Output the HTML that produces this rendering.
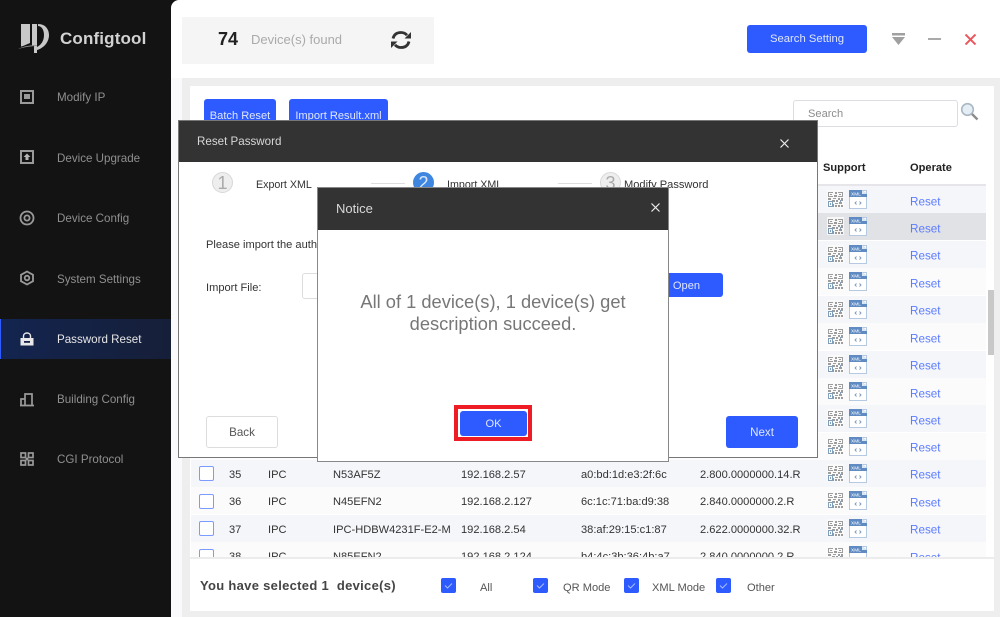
<!DOCTYPE html>
<html><head><meta charset="utf-8"><style>
*{box-sizing:border-box}
html,body{margin:0;padding:0;width:1000px;height:617px;overflow:hidden;background:#131313;font-family:"Liberation Sans",sans-serif;font-size:11.1px;color:#333}
.a{position:absolute;white-space:nowrap}
.nav{position:absolute;left:57px;color:#8f8f8f;font-size:11.6px;line-height:14px;white-space:nowrap}
.ni{position:absolute;left:19px;width:16px;height:16px}
.btn{position:absolute;background:#2e5bff;color:#dfe6ff;border-radius:3px;text-align:center;font-size:11.1px}
.row{position:absolute;left:191px;width:795px;height:27.4px;background:#f5f6fa}
.row.o{background:#fbfbfc}
.row.h{background:#e1e2e5}
.c{position:absolute;top:15px;transform:translateY(-50%);white-space:nowrap;color:#333;font-size:11.1px}
.r{left:719px;color:#5c7cff;font-size:11.7px;top:15.5px}
.q{position:absolute;left:636px;top:4px;width:17px;height:18px}
.x{position:absolute;left:658px;top:4px;width:18px;height:19px}
.cb{position:absolute;left:8px;top:6.5px;width:15px;height:15px;border:1px solid #7c9bff;border-radius:2px;background:#fff}
.ck{position:absolute;width:15px;height:15px;background:#2e5bff;border-radius:2px;top:578px}
.sc{position:absolute;width:21px;height:21px;border-radius:50%;text-align:center;font-size:18px;line-height:20px;background:#eee;border:1px solid #d8d8d8;color:#aaa;font-family:"Liberation Sans",sans-serif}
</style></head><body>
<svg width="0" height="0" style="position:absolute"><defs>
<g id="qr" opacity=".85"><rect width="17" height="18" fill="#fbfbfb"/><path d="M1 2h5v1H2v3h4v1H1zM3 4h2v1H3zM11 2h5v5h-5V6h4V3h-4zM12 4h2v1h-2zM8 2h2v2H8zM7 5h3v2H7zM1 8h3v2H1zM6 8h3v1H6zM11 8h2v2h-2zM14 8h2v3h-2zM5 10h3v2H5zM9 10h2v2H9zM12 12h3v2h-3zM8 13h3v1H8zM8 15h2v2H8zM11 15h2v2h-2zM14 15h2v2h-2z" fill="#8d8d8d"/><path d="M1 11h5v6H1zM2 12v4h3v-4zM3 13h1v2H3zM6 14h1v3H6zM13 10h1v2h-1z" fill="#6c8fb0" fill-rule="evenodd"/></g>
<g id="xm"><rect x=".5" y=".5" width="17" height="18" fill="#fff" stroke="#b5c9e2"/><path d="M0 0h13l5 4v3H0z" fill="#5f8bc2"/><path d="M13 0l5 4h-5z" fill="#dbe6f3"/><text x="2" y="5.500" font-size="4.800" fill="#fff" font-family="Liberation Sans">XML</text><path d="M7.500 11.500l-1.500 1.500 1.500 1.500M10.500 11.500l1.500 1.500-1.500 1.500" fill="none" stroke="#7b97b8" stroke-width=".9"/></g>
<path id="tick" d="M4 7.500l2.500 2.500L11 5.500" fill="none" stroke="#a8bcff" stroke-width="1"/>
</defs></svg>

<!-- sidebar -->
<div class="a" style="left:0;top:0;width:180px;height:617px;background:#131313"></div>
<svg class="a" style="left:17px;top:22px" width="34" height="33" viewBox="0 0 34 33"><path d="M4 2h9v19l-7 3-2 .500z" fill="#c8c8c8"/><path d="M15 2h5v29h-3v-8l-2 .500z" fill="#c8c8c8"/><path d="M21 2c8 0 11 6 11 11 0 7-5 13-12 15v-3c4-2 7-6 7-12 0-6-3-9-6-9z" fill="#c8c8c8"/><path d="M1 27c6-3 14-4 19-4v1c-6 0-13 1-19 3z" fill="#9a9a9a"/></svg>
<div class="a" style="left:60px;top:29px;font-size:17px;line-height:20px;font-weight:bold;color:#d2d2d2;letter-spacing:.15px">Configtool</div>

<svg class="ni" style="top:89px" viewBox="0 0 16 16"><rect x="2" y="2" width="12" height="12" fill="none" stroke="#9a9a9a" stroke-width="2"/><rect x="5" y="5" width="6" height="5" fill="#9a9a9a"/></svg>
<div class="nav" style="top:91px">Modify IP</div>
<svg class="ni" style="top:149px" viewBox="0 0 16 16"><rect x="2" y="2" width="12" height="12" fill="none" stroke="#9a9a9a" stroke-width="2"/><path d="M8 4.500l3.500 3.500H9.500v3h-3V8H4.500z" fill="#b5b5b5"/></svg>
<div class="nav" style="top:152px">Device Upgrade</div>
<svg class="ni" style="top:210px" viewBox="0 0 16 16"><circle cx="8" cy="8" r="6.500" fill="none" stroke="#9a9a9a" stroke-width="1.800"/><circle cx="8" cy="8" r="2.600" fill="none" stroke="#9a9a9a" stroke-width="1.800"/></svg>
<div class="nav" style="top:212px">Device Config</div>
<svg class="ni" style="top:270px" viewBox="0 0 16 16"><path d="M8 1.500l6 3.300v6.400l-6 3.300-6-3.300V4.800z" fill="none" stroke="#9a9a9a" stroke-width="1.800"/><circle cx="8" cy="8" r="2.300" fill="none" stroke="#9a9a9a" stroke-width="1.800"/></svg>
<div class="nav" style="top:273px">System Settings</div>

<div class="a" style="left:0;top:319px;width:173px;height:40px;background:linear-gradient(90deg,#13244f,#161f38);border-left:1px solid #2e5bff"></div>
<svg class="ni" style="top:331px" viewBox="0 0 16 16"><path d="M4.500 7.500V5c0-4 7-4 7 0v2.500" fill="none" stroke="#e8e8e8" stroke-width="1.400"/><rect x="1.500" y="7" width="13" height="7.500" fill="#e8e8e8"/><rect x="5" y="10" width="6" height="1.800" fill="#16224a"/></svg>
<div class="nav" style="top:333px;color:#e6e6e6">Password Reset</div>

<svg class="ni" style="top:391px" viewBox="0 0 16 16"><path d="M2 14V8h4v6M6 14V3h7v11M1 14.500h14" fill="none" stroke="#9a9a9a" stroke-width="1.700"/></svg>
<div class="nav" style="top:393px">Building Config</div>
<svg class="ni" style="top:451px" viewBox="0 0 16 16"><g fill="none" stroke="#9a9a9a" stroke-width="1.700"><rect x="2" y="2" width="4.500" height="4.500"/><rect x="9.500" y="2" width="4.500" height="4.500"/><rect x="2" y="9.500" width="4.500" height="4.500"/><rect x="9.500" y="9.500" width="4.500" height="4.500"/></g><path d="M6 6l4 4M10 6l-4 4" stroke="#9a9a9a" stroke-width="1.500"/></svg>
<div class="nav" style="top:453px">CGI Protocol</div>

<!-- main -->
<div class="a" style="left:171px;top:0;width:829px;height:617px;background:#fff;border-top-left-radius:8px"></div>
<div class="a" style="left:171px;top:78px;width:11px;height:539px;background:#fafafc"></div>
<div class="a" style="left:182px;top:78px;width:818px;height:539px;background:#eee"></div>
<div class="a" style="left:190px;top:86px;width:804px;height:525px;background:#fff"></div>

<div class="a" style="left:182px;top:17px;width:252px;height:47px;background:#f5f5f5"></div>
<div class="a" style="left:218px;top:28px;font-size:18px;line-height:22px;font-weight:bold;color:#222">74</div>
<div class="a" style="left:251px;top:32px;font-size:13px;line-height:15px;color:#aaa">Device(s) found</div>
<svg class="a" style="left:390px;top:29px" width="22" height="22" viewBox="0 0 22 22"><path d="M3 9.500C4 5.500 7 3.500 11 3.500c2.500 0 4.500 1 6 2.700M19 12.500c-1 4-4 6-8 6-2.500 0-4.500-1-6-2.700" fill="none" stroke="#333" stroke-width="2.800"/><path d="M21 3v6.500h-6.500zM1 19v-6.500h6.500z" fill="#333"/></svg>

<div class="btn" style="left:747px;top:25px;width:120px;height:28px;line-height:29px;font-size:11.3px">Search Setting</div>
<svg class="a" style="left:890px;top:31px" width="16" height="16" viewBox="0 0 16 16"><rect x="2" y="2" width="13" height="2.500" fill="#a0a0a0"/><path d="M2 6h13l-6.500 8z" fill="#a0a0a0"/></svg>
<div class="a" style="left:928px;top:38px;width:13px;height:2px;background:#aaa"></div>
<svg class="a" style="left:965px;top:34px" width="11" height="11" viewBox="0 0 11 11"><path d="M.5.500l10 10M10.500.500l-10 10" stroke="#e8585c" stroke-width="2"/></svg>

<div class="btn" style="left:204px;top:99px;width:72px;height:30px;line-height:35px">Batch Reset</div>
<div class="btn" style="left:289px;top:99px;width:99px;height:30px;line-height:35px">Import Result.xml</div>
<div class="a" style="left:793px;top:100px;width:165px;height:27px;border:1px solid #dcdde3;border-radius:3px;background:#fff;padding-left:14px;line-height:27px;color:#8c8c8c">Search</div>
<svg class="a" style="left:960px;top:102px" width="19" height="20" viewBox="0 0 19 20"><circle cx="7.500" cy="7.500" r="5.800" fill="#e6eef5" stroke="#a9b8c4" stroke-width="1.600"/><path d="M12 12l5.500 5.500" stroke="#8d8d8d" stroke-width="2.400"/></svg>

<div class="a" style="left:823px;top:161px;font-weight:bold;color:#222;line-height:14px">Support</div>
<div class="a" style="left:910px;top:161px;font-weight:bold;color:#222;line-height:14px">Operate</div>
<div class="a" style="left:191px;top:184px;width:795px;height:2px;background:#e6e6ea"></div>

<!-- rows -->
<div class="row" style="top:186px"><svg class="q"><use href="#qr"/></svg><svg class="x"><use href="#xm"/></svg><span class="c r">Reset</span></div>
<div class="row h" style="top:213px"><svg class="q"><use href="#qr"/></svg><svg class="x"><use href="#xm"/></svg><span class="c r">Reset</span></div>
<div class="row" style="top:240.500px"><svg class="q"><use href="#qr"/></svg><svg class="x"><use href="#xm"/></svg><span class="c r">Reset</span></div>
<div class="row o" style="top:268px"><svg class="q"><use href="#qr"/></svg><svg class="x"><use href="#xm"/></svg><span class="c r">Reset</span></div>
<div class="row" style="top:295.500px"><svg class="q"><use href="#qr"/></svg><svg class="x"><use href="#xm"/></svg><span class="c r">Reset</span></div>
<div class="row o" style="top:323px"><svg class="q"><use href="#qr"/></svg><svg class="x"><use href="#xm"/></svg><span class="c r">Reset</span></div>
<div class="row" style="top:350.500px"><svg class="q"><use href="#qr"/></svg><svg class="x"><use href="#xm"/></svg><span class="c r">Reset</span></div>
<div class="row o" style="top:378px"><svg class="q"><use href="#qr"/></svg><svg class="x"><use href="#xm"/></svg><span class="c r">Reset</span></div>
<div class="row" style="top:405px"><svg class="q"><use href="#qr"/></svg><svg class="x"><use href="#xm"/></svg><span class="c r">Reset</span></div>
<div class="row o" style="top:432.500px"><svg class="q"><use href="#qr"/></svg><svg class="x"><use href="#xm"/></svg><span class="c r">Reset</span></div>
<div class="row" style="top:459.500px"><i class="cb"></i><span class="c" style="left:38px">35</span><span class="c" style="left:77px">IPC</span><span class="c" style="left:142px">N53AF5Z</span><span class="c" style="left:270px">192.168.2.57</span><span class="c" style="left:390px">a0:bd:1d:e3:2f:6c</span><span class="c" style="left:509px">2.800.0000000.14.R</span><svg class="q"><use href="#qr"/></svg><svg class="x"><use href="#xm"/></svg><span class="c r">Reset</span></div>
<div class="row o" style="top:487px"><i class="cb"></i><span class="c" style="left:38px">36</span><span class="c" style="left:77px">IPC</span><span class="c" style="left:142px">N45EFN2</span><span class="c" style="left:270px">192.168.2.127</span><span class="c" style="left:390px">6c:1c:71:ba:d9:38</span><span class="c" style="left:509px">2.840.0000000.2.R</span><svg class="q"><use href="#qr"/></svg><svg class="x"><use href="#xm"/></svg><span class="c r">Reset</span></div>
<div class="row" style="top:514.500px"><i class="cb"></i><span class="c" style="left:38px">37</span><span class="c" style="left:77px">IPC</span><span class="c" style="left:142px">IPC-HDBW4231F-E2-M</span><span class="c" style="left:270px">192.168.2.54</span><span class="c" style="left:390px">38:af:29:15:c1:87</span><span class="c" style="left:509px">2.622.0000000.32.R</span><svg class="q"><use href="#qr"/></svg><svg class="x"><use href="#xm"/></svg><span class="c r">Reset</span></div>
<div class="row o" style="top:542px"><i class="cb"></i><span class="c" style="left:38px">38</span><span class="c" style="left:77px">IPC</span><span class="c" style="left:142px">N85EFN2</span><span class="c" style="left:270px">192.168.2.124</span><span class="c" style="left:390px">b4:4c:3b:36:4b:a7</span><span class="c" style="left:509px">2.840.0000000.2.R</span><svg class="q"><use href="#qr"/></svg><svg class="x"><use href="#xm"/></svg><span class="c r">Reset</span></div>

<div class="a" style="left:988px;top:290px;width:6px;height:65px;background:#c8c8c8"></div>

<!-- footer -->
<div class="a" style="left:190px;top:557px;width:804px;height:54px;background:#fff;border-top:2px solid #ececec"></div>
<div class="a" style="left:200px;top:578px;font-size:13px;line-height:16px;font-weight:bold;color:#444;letter-spacing:.3px;white-space:pre">You have selected 1  device(s)</div>
<svg class="ck" style="left:441px"><use href="#tick"/></svg><div class="a" style="left:480px;top:581px;line-height:14px;color:#555">All</div>
<svg class="ck" style="left:533px"><use href="#tick"/></svg><div class="a" style="left:563px;top:581px;line-height:14px;color:#555">QR Mode</div>
<svg class="ck" style="left:624px"><use href="#tick"/></svg><div class="a" style="left:652px;top:581px;line-height:14px;color:#555">XML Mode</div>
<svg class="ck" style="left:716px"><use href="#tick"/></svg><div class="a" style="left:747px;top:581px;line-height:14px;color:#555">Other</div>

<!-- dialog 1 -->
<div class="a" style="left:178px;top:120px;width:640px;height:338px;background:#fff;border:1px solid #777"></div>
<div class="a" style="left:179px;top:121px;width:638px;height:41px;background:#333"></div>
<div class="a" style="left:197px;top:135px;line-height:14px;color:#d8d8d8;font-size:11.6px">Reset Password</div>
<svg class="a" style="left:780px;top:139px" width="9" height="9" viewBox="0 0 9 9"><path d="M.5.500l8 8M8.500.500l-8 8" stroke="#eee" stroke-width="1.200"/></svg>
<div class="sc" style="left:212px;top:172px">1</div>
<div class="a" style="left:256px;top:178px;line-height:14px;color:#333;font-size:10.7px">Export XML</div>
<div class="a" style="left:371px;top:183px;width:34px;height:1px;background:#ddd"></div>
<div class="sc" style="left:413px;top:172px;background:#3f86e0;border-color:#3f86e0;color:#dbe8fa">2</div>
<div class="a" style="left:447px;top:178px;line-height:14px;color:#333;font-size:10.7px">Import XML</div>
<div class="a" style="left:558px;top:183px;width:34px;height:1px;background:#ddd"></div>
<div class="sc" style="left:600px;top:172px">3</div>
<div class="a" style="left:624px;top:178px;line-height:14px;color:#333">Modify Password</div>
<div class="a" style="left:206px;top:238px;line-height:14px;color:#333">Please import the auth</div>
<div class="a" style="left:206px;top:281px;line-height:14px;color:#333">Import File:</div>
<div class="a" style="left:302px;top:273px;width:40px;height:26px;border:1px solid #ddd;border-radius:3px"></div>
<div class="btn" style="left:650px;top:273px;width:73px;height:24px;line-height:27px">Open</div>
<div class="a" style="left:206px;top:416px;width:72px;height:32px;border:1px solid #ddd;border-radius:3px;text-align:center;line-height:32px;color:#555;font-size:11.6px">Back</div>
<div class="btn" style="left:726px;top:416px;width:72px;height:32px;line-height:33px;font-size:11.6px">Next</div>

<!-- dialog 2 -->
<div class="a" style="left:317px;top:187px;width:352px;height:275px;background:#fff;border:1px solid #888"></div>
<div class="a" style="left:318px;top:188px;width:350px;height:42px;background:#333"></div>
<div class="a" style="left:336px;top:201px;font-size:13px;line-height:15px;color:#d8d8d8">Notice</div>
<svg class="a" style="left:651px;top:203px" width="9" height="9" viewBox="0 0 9 9"><path d="M.5.500l8 8M8.500.500l-8 8" stroke="#eee" stroke-width="1.200"/></svg>
<div class="a" style="left:318px;top:291px;width:350px;text-align:center;font-size:18.300px;line-height:22px;color:#777;white-space:normal;padding:0 30px">All of 1 device(s), 1 device(s) get description succeed.</div>
<div class="a" style="left:454px;top:405px;width:78px;height:36px;background:#fff;border:4px solid #ee1c25"></div>
<div class="btn" style="left:460px;top:411px;width:67px;height:25px;line-height:26px">OK</div>
</body></html>
